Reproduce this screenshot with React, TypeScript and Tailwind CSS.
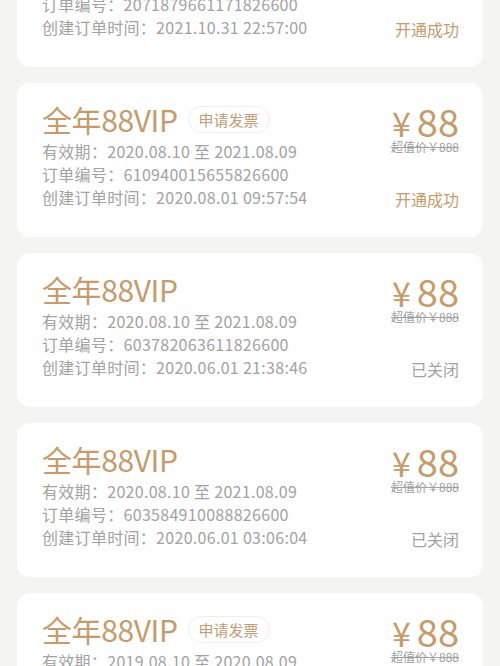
const orders = [
  {
    invoice: true,
    valid: '2021.11.01 至 2022.10.31',
    no: '2071879661171826600',
    created: '2021.10.31 22:57:00',
    status: '开通成功',
  },
  {
    invoice: true,
    valid: '2020.08.10 至 2021.08.09',
    no: '610940015655826600',
    created: '2020.08.01 09:57:54',
    status: '开通成功',
  },
  {
    invoice: false,
    valid: '2020.08.10 至 2021.08.09',
    no: '603782063611826600',
    created: '2020.06.01 21:38:46',
    status: '已关闭',
  },
  {
    invoice: false,
    valid: '2020.08.10 至 2021.08.09',
    no: '603584910088826600',
    created: '2020.06.01 03:06:04',
    status: '已关闭',
  },
  {
    invoice: true,
    valid: '2019.08.10 至 2020.08.09',
    no: '512694300188826600',
    created: '2019.08.01 10:12:33',
    status: '开通成功',
  },
]

type Order = (typeof orders)[number]

function OrderCard({ order }: { order: Order }) {
  const success = order.status === '开通成功'
  return (
    <div className="h-[154px] shrink-0 rounded-[13px] bg-[#fefefe] pl-[25px] pr-[24px] pt-[18px] flex justify-between">
      <div className="flex flex-col">
        <div className="flex items-center h-[36px]">
          <span className="text-[30px] leading-[36px] text-[#c69b6d] tracking-[-0.4px]">全年88VIP</span>
          {order.invoice && (
            <span className="ml-[10px] h-[27px] px-[10px] rounded-full border border-[#f2eee9] text-[15px] leading-[25px] text-[#c49c74]">
              申请发票
            </span>
          )}
        </div>
        <div className="mt-[3px] text-[16px] leading-[23px] tracking-[0.3px] text-[#a3a3a3]">
          <div>有效期：{order.valid}</div>
          <div>订单编号：{order.no}</div>
          <div>创建订单时间：{order.created}</div>
        </div>
      </div>
      <div className="flex flex-col items-end pb-[28px]">
        <div className="flex items-baseline text-[#c69b6d] leading-[40px] h-[40px]">
          <span className="text-[34px] mr-[6px]">¥</span>
          <span className="text-[38px]">88</span>
        </div>
        <div className="text-[12px] leading-[14px] text-[#a0a0a0] line-through -mt-[1px]">超值价￥888</div>
        <div
          className={`mt-auto text-[16px] leading-[23px] relative top-[2px] ${success ? 'text-[#c69b6d]' : 'text-[#a3a3a3]'}`}
        >
          {order.status}
        </div>
      </div>
    </div>
  )
}

export default function App() {
  return (
    <div
      className="w-[500px] h-[666px] overflow-hidden bg-[#f4f4f3]"
      style={{ fontFamily: '"Noto Sans CJK SC", "Noto Sans", sans-serif' }}
    >
      <div className="-mt-[87px] px-[17px] flex flex-col gap-4">
        {orders.map((o, i) => (
          <OrderCard key={i} order={o} />
        ))}
      </div>
    </div>
  )
}
